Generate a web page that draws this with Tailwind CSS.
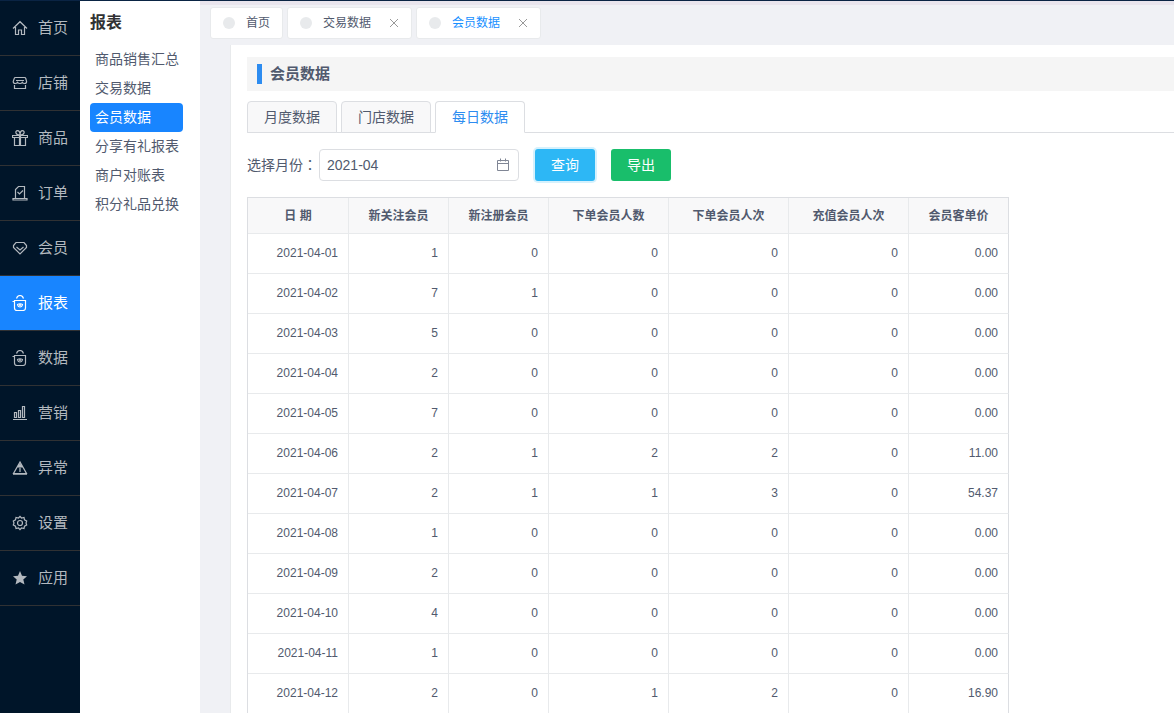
<!DOCTYPE html>
<html lang="zh-CN">
<head>
    <meta charset="UTF-8">
    <meta name="viewport" content="width=device-width, initial-scale=1.0">
    <title>会员数据</title>
    <script src="https://cdn.jsdelivr.net/npm/@tailwindcss/browser@4"></script>
</head>
<body class="h-screen overflow-hidden flex border-t border-[#0a2444] bg-[#f0f1f5] text-sm text-[#515a6e] font-['Liberation_Sans','Noto_Sans_CJK_SC',sans-serif]">
    <!-- Main navigation -->
    <nav class="w-20 shrink-0 bg-[#001529] text-[15px] text-[#b3b9bf] [&_a]:flex [&_a]:items-center [&_a]:gap-2.5 [&_a]:h-[55px] [&_a]:pl-3 [&_a]:border-b [&_a]:border-[#303133] [&_a]:whitespace-nowrap [&_svg]:size-4 [&_svg]:shrink-0 [&_svg]:fill-none [&_svg]:stroke-current [&_svg]:stroke-[1.2]">
        <a href="#"><svg viewBox="0 0 16 16"><path d="M1 8.500 8 1.700l7 6.800M3.500 7v7.500h3V10h3v4.500h3V7"/></svg>首页</a>
        <a href="#"><svg viewBox="0 0 16 16"><path d="M3.500 2.500h9q1 0 1.300 1l.8 3q0 2-2 2-1.500 0-2.300-1.200Q9.500 8.500 8 8.500T5.500 7.300Q4.700 8.500 3.200 8.500q-2 0-2-2l1-3q.3-1 1.300-1zM4 5.500h8M2.500 10v3.500h11V10"/></svg>店铺</a>
        <a href="#"><svg viewBox="0 0 16 16"><path d="M.5 5.500h15v2H.5zM2.500 7.500v8h11v-8M7.500 5v10.500M8.500 5v10.500M8 5C3 5 3 .700 5.500.700 7 .700 8 2.500 8 5c0-2.500 1-4.300 2.500-4.300C13 .700 13 5 8 5"/></svg>商品</a>
        <a href="#"><svg viewBox="0 0 16 16"><path d="M3.500 13V4.500l3-3h6V13M2.500 13.500H1v1.500h14v-1.500h-2.500zM5.500 7l2 2L11 5.500"/></svg>订单</a>
        <a href="#"><svg viewBox="0 0 16 16"><path d="M4 2.500h8l2.500 3v2L8 14 1.500 7.500v-2zM4.500 7 8 10l3.500-3"/></svg>会员</a>
        <a href="#" class="bg-[#1885ff] text-white"><svg viewBox="0 0 16 16"><path d="M4.500 3.500C5 1.500 6.500.500 8 .500s3 1 3.500 3M2.500 5.500h11V13q0 2.500-2.500 2.500H5Q2.500 15.500 2.500 13zM2.500 6.500h-2M5.500 9.500q2.500-1.500 5 0-.5 2.500-2.500 2.500t-2.500-2.500z"/><circle cx="8" cy="10" r=".5"/></svg>报表</a>
        <a href="#"><svg viewBox="0 0 16 16"><path d="M4.500 3.500C5 1.500 6.500.500 8 .500s3 1 3.500 3M2.500 5.500h11V13q0 2.500-2.500 2.500H5Q2.500 15.500 2.500 13zM2.500 6.500h-2M5.500 9.500q2.500-1.500 5 0-.5 2.500-2.500 2.500t-2.500-2.500z"/><circle cx="8" cy="10" r=".5"/></svg>数据</a>
        <a href="#"><svg viewBox="0 0 16 16"><path d="M1 14.500h14M2.500 7.500h2v5h-2zM6.500 5.500h2v7h-2zM10.500 1.500h2v11h-2z"/></svg>营销</a>
        <a href="#"><svg viewBox="0 0 16 16"><path d="M8 2 1.500 13.500h13zM8 5v7M6 7.500 8 4.500l2 3M1 14.200h14"/></svg>异常</a>
        <a href="#"><svg viewBox="0 0 16 16"><path d="M6.500 3 8 1.300 9.500 3l2.500-.5.500 2.300L14.700 6 14 8l.7 2-2.200 1.200-.5 2.300-2.500-.5L8 14.700 6.500 13l-2.500.5-.5-2.300L1.300 10 2 8l-.7-2 2.200-1.200L4 2.500z"/><circle cx="8" cy="8" r="2.500"/></svg>设置</a>
        <a href="#"><svg viewBox="0 0 16 16"><path fill="currentColor" stroke="none" d="M8 1l2 4.800 5 .4-3.700 3.400 1.200 5L8 12l-4.500 2.600 1.200-5L1 6.200l5-.4z"/></svg>应用</a>
    </nav>

    <!-- Section navigation -->
    <aside class="w-[120px] shrink-0 bg-white pl-2.5 pr-[17px] pt-2.5">
        <h2 class="text-base leading-6 font-bold text-[#303133] mb-2.5">报表</h2>
        <div class="[&_a]:block [&_a]:px-[5px] [&_a]:leading-[29px] [&_a]:whitespace-nowrap">
            <a href="#">商品销售汇总</a>
            <a href="#">交易数据</a>
            <a href="#" class="bg-[#1885ff] text-white rounded">会员数据</a>
            <a href="#">分享有礼报表</a>
            <a href="#">商户对账表</a>
            <a href="#">积分礼品兑换</a>
        </div>
    </aside>

    <div class="flex-1 min-w-0 flex flex-col">
        <div class="h-1 shrink-0 bg-[#e9e5ed]"></div>
        <!-- Opened pages -->
        <div class="flex gap-1 pl-2.5 pt-0.5 pb-1.5 text-xs [&>div]:flex [&>div]:items-center [&>div]:h-8 [&>div]:px-3 [&>div]:bg-white [&>div]:border [&>div]:border-[#e8eaec] [&>div]:rounded-[3px] [&_i]:size-3 [&_i]:mr-[11px] [&_i]:rounded-full [&_i]:bg-[#e8eaec] [&_svg]:size-2.5 [&_svg]:stroke-[#999]">
            <div><i></i><a href="#">首页</a></div>
            <div><i></i><a href="#">交易数据</a><button type="button" aria-label="关闭" class="ml-[18px]"><svg viewBox="0 0 10 10"><path d="M1 1l8 8M9 1 1 9"/></svg></button></div>
            <div><i></i><a href="#" class="text-[#1890ff]">会员数据</a><button type="button" aria-label="关闭" class="ml-[18px]"><svg viewBox="0 0 10 10"><path d="M1 1l8 8M9 1 1 9"/></svg></button></div>
        </div>

        <main class="flex-1 min-h-0 overflow-hidden ml-[30px] pl-4 pt-3 bg-white border-l border-[#e8eaec]">
            <div class="flex items-center gap-2 h-[34px] pl-2.5 bg-[#f5f5f5]">
                <span class="w-[5px] h-5 bg-[#2d8cf0]"></span>
                <h1 class="text-[15px] font-bold">会员数据</h1>
            </div>

            <div class="flex gap-1 mt-2.5 border-b border-[#dcdee2] [&_button]:h-8 [&_button]:px-4 [&_button]:-mb-px [&_button]:border [&_button]:border-[#dcdee2] [&_button]:rounded-t">
                <button type="button" class="bg-[#f8f8f9]">月度数据</button>
                <button type="button" class="bg-[#f8f8f9]">门店数据</button>
                <button type="button" class="bg-white border-b-white! text-[#2d8cf0]">每日数据</button>
            </div>

            <form class="flex items-center mt-4">
                <label for="month" class="w-[72px] whitespace-nowrap">选择月份<span lang="zh-TW" class="font-['Noto_Sans_CJK_TC',sans-serif] leading-none">：</span></label>
                <div class="relative w-[200px]">
                    <input id="month" type="text" value="2021-04" class="w-full h-8 px-[7px] border border-[#dcdee2] rounded bg-white">
                    <svg viewBox="0 0 14 14" class="absolute right-[9px] top-[9px] size-3.5 fill-none stroke-[#808695]"><path d="M1.500 2.500h11v10h-11zM1.500 5.500h11M4.500.500v3M9.500.500v3"/></svg>
                </div>
                <button type="button" class="ml-4 w-[60px] h-8 rounded-[3px] bg-[#2db7f5] text-white shadow-[0_0_0_2px_#2db7f533]">查询</button>
                <button type="button" class="ml-4 w-[60px] h-8 rounded-[3px] bg-[#19be6b] text-white">导出</button>
            </form>

            <table class="mt-4 w-[762px] table-fixed border-separate border-spacing-0 border-t border-l border-[#dcdee2] text-xs [&_th]:h-9 [&_th]:bg-[#f8f8f9] [&_th]:border-b [&_th]:border-r [&_th]:border-[#e8eaec] [&_td]:h-10 [&_td]:pr-2.5 [&_td]:pb-0.5 [&_td]:text-right [&_td]:border-b [&_td]:border-r [&_td]:border-[#e8eaec] [&_tr>*:last-child]:border-r-[#dcdee2]">
                <colgroup>
                    <col class="w-[101px]"><col class="w-[100px]"><col class="w-[100px]"><col class="w-[120px]"><col class="w-[120px]"><col class="w-[120px]"><col class="w-[100px]">
                </colgroup>
                <thead>
                    <tr><th>日 期</th><th>新关注会员</th><th>新注册会员</th><th>下单会员人数</th><th>下单会员人次</th><th>充值会员人次</th><th>会员客单价</th></tr>
                </thead>
                <tbody>
                    <tr><td>2021-04-01</td><td>1</td><td>0</td><td>0</td><td>0</td><td>0</td><td>0.00</td></tr>
                    <tr><td>2021-04-02</td><td>7</td><td>1</td><td>0</td><td>0</td><td>0</td><td>0.00</td></tr>
                    <tr><td>2021-04-03</td><td>5</td><td>0</td><td>0</td><td>0</td><td>0</td><td>0.00</td></tr>
                    <tr><td>2021-04-04</td><td>2</td><td>0</td><td>0</td><td>0</td><td>0</td><td>0.00</td></tr>
                    <tr><td>2021-04-05</td><td>7</td><td>0</td><td>0</td><td>0</td><td>0</td><td>0.00</td></tr>
                    <tr><td>2021-04-06</td><td>2</td><td>1</td><td>2</td><td>2</td><td>0</td><td>11.00</td></tr>
                    <tr><td>2021-04-07</td><td>2</td><td>1</td><td>1</td><td>3</td><td>0</td><td>54.37</td></tr>
                    <tr><td>2021-04-08</td><td>1</td><td>0</td><td>0</td><td>0</td><td>0</td><td>0.00</td></tr>
                    <tr><td>2021-04-09</td><td>2</td><td>0</td><td>0</td><td>0</td><td>0</td><td>0.00</td></tr>
                    <tr><td>2021-04-10</td><td>4</td><td>0</td><td>0</td><td>0</td><td>0</td><td>0.00</td></tr>
                    <tr><td>2021-04-11</td><td>1</td><td>0</td><td>0</td><td>0</td><td>0</td><td>0.00</td></tr>
                    <tr><td>2021-04-12</td><td>2</td><td>0</td><td>1</td><td>2</td><td>0</td><td>16.90</td></tr>
                </tbody>
            </table>
        </main>
    </div>
</body>
</html>
